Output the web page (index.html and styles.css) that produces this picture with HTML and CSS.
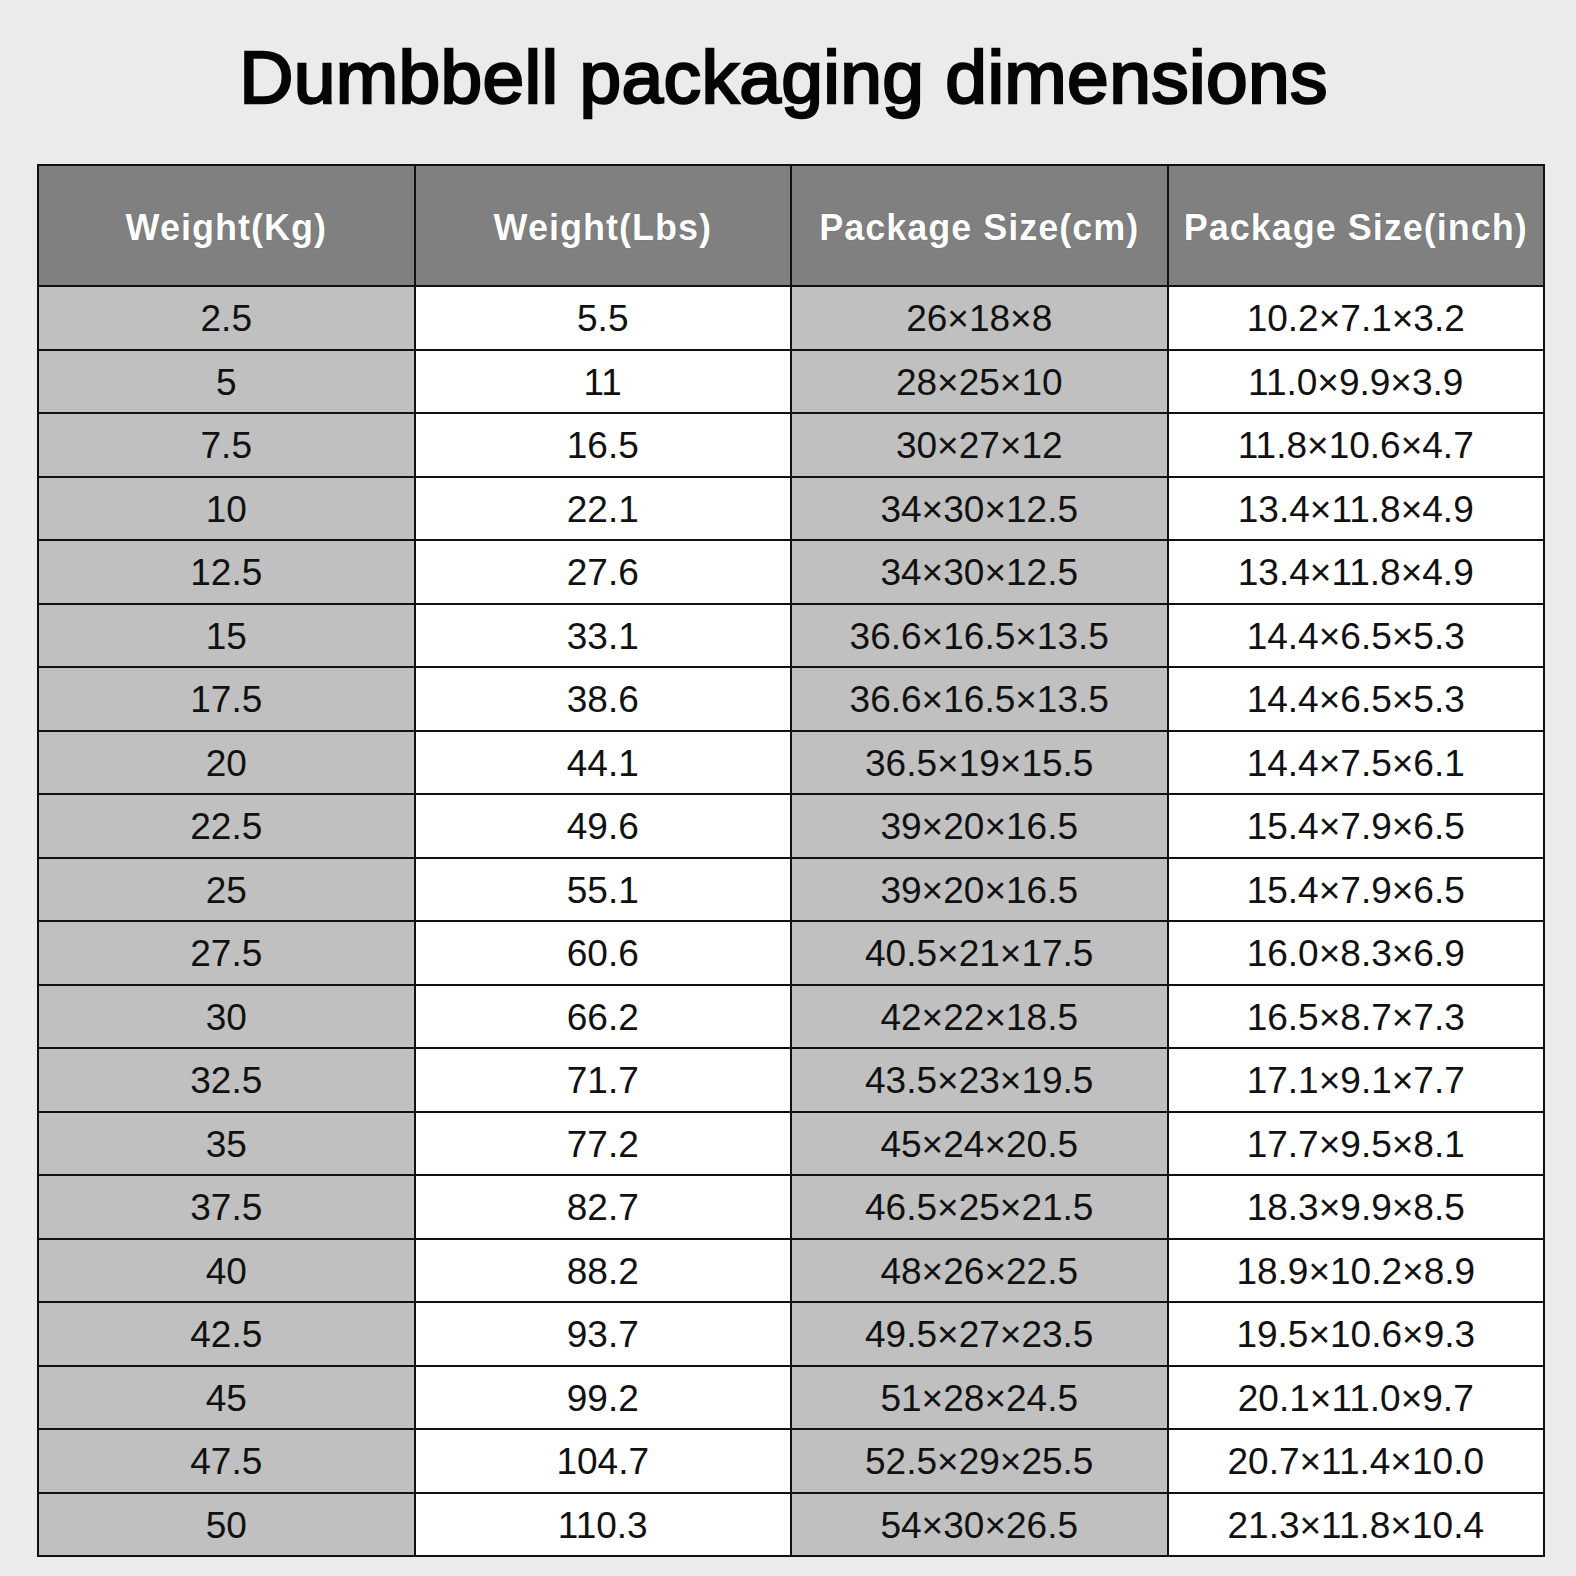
FILE: index.html
```html
<!DOCTYPE html>
<html lang="en">
<head>
<meta charset="utf-8">
<title>Dumbbell packaging dimensions</title>
<link rel="stylesheet" href="styles.css">
</head>
<body>
<h1 class="title">Dumbbell packaging dimensions</h1>
<div class="table">
  <div class="cell head">Weight(Kg)</div>
  <div class="cell head">Weight(Lbs)</div>
  <div class="cell head">Package Size(cm)</div>
  <div class="cell head">Package Size(inch)</div>

  <div class="cell grey">2.5</div><div class="cell">5.5</div><div class="cell grey">26×18×8</div><div class="cell">10.2×7.1×3.2</div>
  <div class="cell grey">5</div><div class="cell">11</div><div class="cell grey">28×25×10</div><div class="cell">11.0×9.9×3.9</div>
  <div class="cell grey">7.5</div><div class="cell">16.5</div><div class="cell grey">30×27×12</div><div class="cell">11.8×10.6×4.7</div>
  <div class="cell grey">10</div><div class="cell">22.1</div><div class="cell grey">34×30×12.5</div><div class="cell">13.4×11.8×4.9</div>
  <div class="cell grey">12.5</div><div class="cell">27.6</div><div class="cell grey">34×30×12.5</div><div class="cell">13.4×11.8×4.9</div>
  <div class="cell grey">15</div><div class="cell">33.1</div><div class="cell grey">36.6×16.5×13.5</div><div class="cell">14.4×6.5×5.3</div>
  <div class="cell grey">17.5</div><div class="cell">38.6</div><div class="cell grey">36.6×16.5×13.5</div><div class="cell">14.4×6.5×5.3</div>
  <div class="cell grey">20</div><div class="cell">44.1</div><div class="cell grey">36.5×19×15.5</div><div class="cell">14.4×7.5×6.1</div>
  <div class="cell grey">22.5</div><div class="cell">49.6</div><div class="cell grey">39×20×16.5</div><div class="cell">15.4×7.9×6.5</div>
  <div class="cell grey">25</div><div class="cell">55.1</div><div class="cell grey">39×20×16.5</div><div class="cell">15.4×7.9×6.5</div>
  <div class="cell grey">27.5</div><div class="cell">60.6</div><div class="cell grey">40.5×21×17.5</div><div class="cell">16.0×8.3×6.9</div>
  <div class="cell grey">30</div><div class="cell">66.2</div><div class="cell grey">42×22×18.5</div><div class="cell">16.5×8.7×7.3</div>
  <div class="cell grey">32.5</div><div class="cell">71.7</div><div class="cell grey">43.5×23×19.5</div><div class="cell">17.1×9.1×7.7</div>
  <div class="cell grey">35</div><div class="cell">77.2</div><div class="cell grey">45×24×20.5</div><div class="cell">17.7×9.5×8.1</div>
  <div class="cell grey">37.5</div><div class="cell">82.7</div><div class="cell grey">46.5×25×21.5</div><div class="cell">18.3×9.9×8.5</div>
  <div class="cell grey">40</div><div class="cell">88.2</div><div class="cell grey">48×26×22.5</div><div class="cell">18.9×10.2×8.9</div>
  <div class="cell grey">42.5</div><div class="cell">93.7</div><div class="cell grey">49.5×27×23.5</div><div class="cell">19.5×10.6×9.3</div>
  <div class="cell grey">45</div><div class="cell">99.2</div><div class="cell grey">51×28×24.5</div><div class="cell">20.1×11.0×9.7</div>
  <div class="cell grey">47.5</div><div class="cell">104.7</div><div class="cell grey">52.5×29×25.5</div><div class="cell">20.7×11.4×10.0</div>
  <div class="cell grey">50</div><div class="cell">110.3</div><div class="cell grey">54×30×26.5</div><div class="cell">21.3×11.8×10.4</div>
</div>
</body>
</html>
```
FILE: styles.css
```css
html, body {
  margin: 0;
  padding: 0;
  background: #ebebeb;
}
body {
  width: 1576px;
  height: 1576px;
  font-family: "Liberation Sans", Arial, sans-serif;
  color: #111;
}
.title {
  box-sizing: border-box;
  height: 164px;
  margin: 0;
  padding-top: 40px;
  padding-right: 9px;
  font-size: 75px;
  line-height: 74px;
  font-weight: normal;
  letter-spacing: 0.3px;
  -webkit-text-stroke: 2.4px #050505;
  text-align: center;
  color: #050505;
}
.table {
  box-sizing: border-box;
  margin-left: 37px;
  width: 1508px;
  height: 1393px;
  padding: 2px;
  display: grid;
  grid-template-columns: repeat(4, 1fr);
  grid-template-rows: 119px repeat(20, 1fr);
  gap: 2px;
  background: #111;
}
.cell {
  display: flex;
  align-items: center;
  justify-content: center;
  background: #fff;
  font-size: 37px;
  padding-top: 3px;
}
.cell.grey {
  background: #c0c0c0;
}
.cell.head {
  background: #808080;
  color: #fff;
  font-weight: bold;
  font-size: 36px;
  letter-spacing: 1px;
  padding-top: 5px;
  text-shadow: 0 0 1px #555;
}
```
